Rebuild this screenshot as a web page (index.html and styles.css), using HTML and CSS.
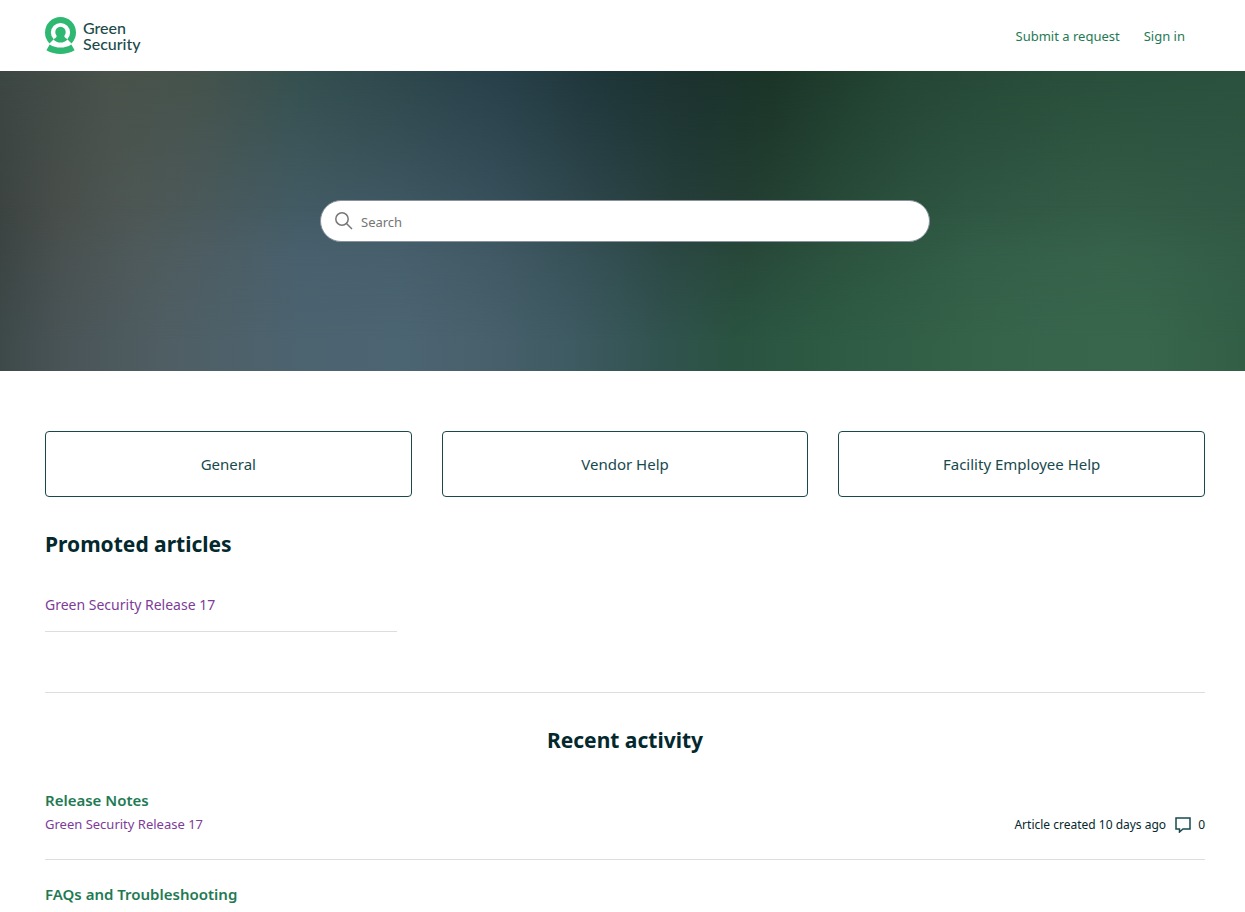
FILE: index.html
```html
<!DOCTYPE html>
<html lang="en">
<head>
<meta charset="utf-8">
<title>Green Security Help Center</title>
<link rel="stylesheet" href="styles.css">
</head>
<body>
<header class="header">
  <a class="logo" href="#">
    <svg class="logo-mark" viewBox="0 0 31 37" aria-hidden="true">
      <path fill="#2eb872" d="M4.500 26.500A15.500 15.500 0 1 1 26.500 26.500L22.300 22.300A9.600 9.600 0 1 0 8.700 22.300Z"/>
      <path fill="#2eb872" d="M15.500 9.800a5.200 5.200 0 0 1 5.200 5.200c0 1.800-.7 2.900-1.400 3.900.1 1.500 1.300 2.400 3.400 3.300-2 2.400-4.400 3.400-7.200 3.400s-5.200-1-7.200-3.400c2.100-.9 3.300-1.800 3.400-3.300-.7-1-1.400-2.100-1.400-3.900a5.200 5.200 0 0 1 5.200-5.200z"/>
      <path fill="#2eb872" d="M4.700 27.400C11 31.600 20 31.600 26.300 27.400L29.600 33.200C21 38.200 10 38.200 1.400 33.200Z"/>
    </svg>
    <span class="logo-text"><span>Green</span><span>Security</span></span>
  </a>
  <nav class="nav">
    <a href="#">Submit a request</a>
    <a href="#">Sign in</a>
  </nav>
</header>
<main>
  <section class="hero">
    <form class="search" role="search">
      <svg class="search-icon" viewBox="0 0 18 18" aria-hidden="true"><circle cx="7" cy="7" r="6.200"/><path d="M11.500 11.500 17 17"/></svg>
      <input class="search-input" type="search" placeholder="Search" aria-label="Search">
    </form>
  </section>
  <div class="container">
    <ul class="blocks">
      <li><a class="block" href="#">General</a></li>
      <li><a class="block" href="#">Vendor Help</a></li>
      <li><a class="block" href="#">Facility Employee Help</a></li>
    </ul>
    <section class="promoted">
      <h2 class="title">Promoted articles</h2>
      <ul class="promoted-list">
        <li class="promoted-item"><a class="visited" href="#">Green Security Release 17</a></li>
      </ul>
    </section>
    <section class="activity">
      <h2 class="title title-center">Recent activity</h2>
      <ul class="activity-list">
        <li class="activity-item">
          <h3 class="activity-title"><a href="#">Release Notes</a></h3>
          <div class="activity-row">
            <a class="visited" href="#">Green Security Release 17</a>
            <div class="meta">
              <span>Article created 10 days ago</span>
              <span class="comments">
                <svg class="comment-icon" viewBox="0 0 16 16" aria-label="Comments"><path d="M1 1H15V12H8L4.500 15V12H1Z"/></svg>
                0
              </span>
            </div>
          </div>
        </li>
        <li class="activity-item">
          <h3 class="activity-title"><a href="#">FAQs and Troubleshooting</a></h3>
        </li>
      </ul>
    </section>
  </div>
</main>
</body>
</html>
```
FILE: styles.css
```css
* { box-sizing: border-box; }
html { overflow: hidden; }
body {
  margin: 0;
  background: #fff;
  color: #03282d;
  font-family: "Segoe UI", "Noto Sans", "Open Sans", sans-serif;
  font-size: 14px;
  line-height: 24px;
}
a { color: #1f7a54; text-decoration: none; }
ul { list-style: none; margin: 0; padding: 0; }
h2, h3 { margin: 0; }

.header {
  display: flex;
  align-items: center;
  justify-content: space-between;
  height: 71px;
  padding: 0 60px 0 45px;
}
.logo { display: flex; align-items: center; gap: 7px; }
.logo-mark { width: 31px; height: 37px; }
.logo-text {
  display: flex;
  flex-direction: column;
  color: #1c4a4a;
  font-family: Lato, Inter, sans-serif;
  font-size: 16px;
  font-weight: 500;
  line-height: 16px;
}
.nav { display: flex; gap: 24px; font-size: 13px; }

.hero {
  position: relative;
  display: flex;
  align-items: center;
  height: 300px;
  padding: 0 40px 0 45px;
  background: linear-gradient(90deg, #3d4643 0%, #49524b 9%, #45534c 16%, #35504f 24%, #2c464c 34%, #28404a 40%, #1f363a 48%, #1b322e 56%, #1b3528 62%, #254735 73%, #294f3b 86%, #2a523e 100%);
}
.hero::before, .hero::after { content: ""; position: absolute; inset: 0; }
.hero::before {
  background: linear-gradient(90deg, #3c4341 0%, #4a504d 5%, #4f5958 11%, #4c5c61 17%, #475f6c 24%, #455d6a 32%, #3d5661 40%, #324b50 48%, #2a433f 54%, #264236 60%, #2b503d 68%, #325b47 78%, #37604a 89%, #345b47 100%);
  mask-image: linear-gradient(transparent 0%, #0004 18%, #000 62%);
}
.hero::after {
  background: linear-gradient(90deg, #3d4949 0%, #495457 5%, #4f5e63 13%, #4c6370 24%, #4c6572 32%, #48606c 39%, #3e5a62 46%, #31534f 53%, #2a5341 59%, #2d5a43 66%, #356349 79%, #37654c 84%, #37664c 92%, #325e46 100%);
  mask-image: linear-gradient(transparent 45%, #000 90%);
}
.search {
  position: relative;
  z-index: 1;
  display: flex;
  align-items: center;
  gap: 8px;
  width: 610px;
  height: 42px;
  margin: 0 auto;
  padding: 0 14px;
  border: 1px solid #87929d;
  border-radius: 21px;
  background: #fff;
}
.search-icon { flex: none; width: 18px; height: 18px; fill: none; stroke: #777; stroke-width: 1.500; }
.search-input {
  flex: 1;
  min-width: 0;
  padding: 2px 0 0;
  border: 0;
  outline: 0;
  background: none;
  color: #333;
  font: inherit;
  font-size: 13px;
}
.search-input::placeholder { color: #757575; opacity: 1; }

.container { padding: 60px 40px 0 45px; }
.blocks { display: grid; grid-template-columns: repeat(3, 1fr); gap: 30px; }
.block {
  display: block;
  padding: 20px;
  border: 1px solid #17494d;
  border-radius: 4px;
  color: #17494d;
  font-size: 15px;
  text-align: center;
}
.title { font-size: 21px; font-weight: 700; line-height: 32px; }
.title-center { text-align: center; }
.promoted { padding-top: 31px; }
.promoted-list { display: grid; grid-template-columns: repeat(3, 1fr); gap: 52px; margin-top: 32px; }
.promoted-item { padding: 1px 0 14px; border-bottom: 1px solid #ddd; }
.visited { color: #7d3c98; }
.activity { margin-top: 60px; padding-top: 31px; border-top: 1px solid #ddd; }
.activity-list { margin-top: 32px; }
.activity-item { padding-bottom: 22px; margin-bottom: 22px; border-bottom: 1px solid #ddd; }
.activity-title { font-size: 15px; font-weight: 600; line-height: 24px; }
.activity-row { display: flex; justify-content: space-between; font-size: 13px; }
.meta { display: flex; gap: 9px; padding-top: 1px; font-size: 12px; }
.comments { display: flex; align-items: center; gap: 7px; }
.comment-icon { width: 16px; height: 16px; fill: none; stroke: #17494d; stroke-width: 1.500; }
```
